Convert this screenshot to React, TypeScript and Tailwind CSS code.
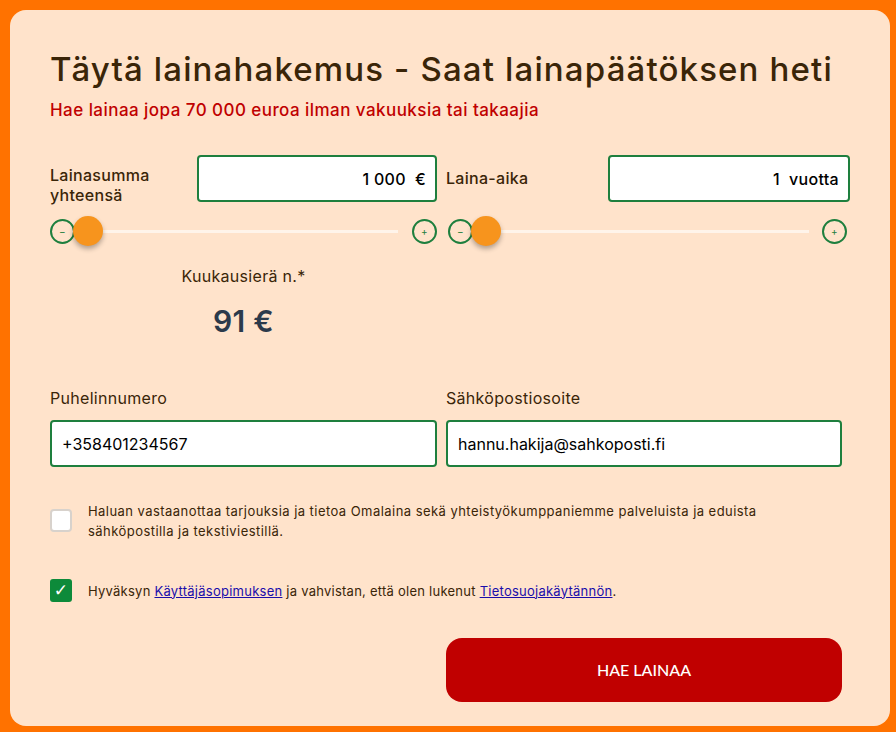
const font = { fontFamily: "Inter, 'Noto Sans', sans-serif" };

function Slider({ trackW }: { trackW: string }) {
  return (
    <div className="flex items-center h-[30px]">
      <button className="w-[25px] h-[25px] rounded-full border-2 border-[#1e7f3e] flex items-center justify-center text-[10px] leading-none text-[#1e7f3e] shrink-0">
        −
      </button>
      <div className="w-[30px] h-[30px] -ml-[2px] rounded-full bg-[#f7941d] shadow-[0_3px_5px_rgba(0,0,0,0.3)] shrink-0 z-10" />
      <div className={`${trackW} h-[3px] bg-[#fff4ea]`} />
      <div className="flex-1" />
      <button className="w-[25px] h-[25px] rounded-full border-2 border-[#1e7f3e] flex items-center justify-center text-[10px] leading-none text-[#1e7f3e] shrink-0">
        +
      </button>
    </div>
  );
}

export default function App() {
  return (
    <div className="w-[896px] h-[732px] bg-[#ff7200] pt-[10px] pl-[10px]" style={font}>
      <div className="w-[880px] h-[716px] rounded-[16px] bg-[#ffe3cb] pl-[40px] pr-[40px] pt-[37px] text-[#3a2508] tracking-[0.3px]">
        <h1 className="text-[33px] leading-[44px] font-medium text-[#3a2508] tracking-[1.15px] whitespace-nowrap">
          Täytä lainahakemus - Saat lainapäätöksen heti
        </h1>
        <p className="mt-[8px] text-[17px] leading-[22px] font-medium text-[#c00000] tracking-[0.45px]">
          Hae lainaa jopa 70 000 euroa ilman vakuuksia tai takaajia
        </p>

        <div className="mt-[34px] grid grid-cols-[387px_404px] gap-x-[9px]">
          <div>
            <div className="flex items-start">
              <div className="w-[147px] h-[47px] pt-[10px] text-[16px] leading-[20px] font-medium overflow-visible">
                Lainasumma
                <br />
                yhteensä
              </div>
              <div className="w-[240px] h-[47px] bg-white border-2 border-[#1e7f3e] rounded-[4px] flex items-center justify-end pr-[9px] text-[16px] font-medium text-black whitespace-pre">
                1 000  €
              </div>
            </div>
            <div className="mt-[14px]">
              <Slider trackW="w-[295px]" />
            </div>
          </div>
          <div>
            <div className="flex items-start">
              <div className="w-[162px] pt-[14px] text-[16px] leading-[18px] font-medium">Laina-aika</div>
              <div className="w-[242px] h-[47px] bg-white border-2 border-[#1e7f3e] rounded-[4px] flex items-center justify-end pr-[9px] text-[16px] font-medium text-black whitespace-pre">
                1  vuotta
              </div>
            </div>
            <div className="mt-[14px] pl-[2px] pr-[3px]">
              <Slider trackW="w-[308px]" />
            </div>
          </div>
        </div>

        <div className="w-[387px] flex flex-col items-center mt-[20px]">
          <div className="text-[16px] leading-[20px] text-[#3a2508]">Kuukausierä n.*</div>
          <div className="mt-[17px] text-[30px] leading-[36px] font-semibold text-[#2c3a4b]">91 €</div>
        </div>

        <div className="mt-[49px] grid grid-cols-[387px_396px] gap-x-[9px]">
          <div>
            <div className="text-[16px] leading-[20px] text-[#3a2508]">Puhelinnumero</div>
            <div className="mt-[12px] h-[47px] bg-white border-2 border-[#1e7f3e] rounded-[4px] flex items-center pl-[10px] text-[16px] text-black tracking-normal">
              +358401234567
            </div>
          </div>
          <div>
            <div className="text-[16px] leading-[20px] text-[#3a2508]">Sähköpostiosoite</div>
            <div className="mt-[12px] h-[47px] bg-white border-2 border-[#1e7f3e] rounded-[4px] flex items-center pl-[10px] text-[16px] text-black tracking-normal">
              hannu.hakija@sahkoposti.fi
            </div>
          </div>
        </div>

        <div className="mt-[34px] flex items-start">
          <div className="mt-[8px] w-[22px] h-[23px] bg-white border-2 border-[#d8d2cc] rounded-[4px] shrink-0" />
          <p className="ml-[16px] text-[13px] leading-[20px] text-[#3a2508] w-[700px] tracking-[0.45px]">
            Haluan vastaanottaa tarjouksia ja tietoa Omalaina sekä yhteistyökumppaniemme palveluista ja eduista sähköpostilla ja tekstiviestillä.
          </p>
        </div>

        <div className="mt-[38px] flex items-center">
          <div className="w-[22px] h-[23px] bg-[#0d8a3a] rounded-[3px] flex items-center justify-center shrink-0 text-white text-[17px] leading-none" style={{ fontFamily: "'DejaVu Sans', sans-serif" }}>
            ✓
          </div>
          <p className="ml-[16px] text-[13px] leading-[20px] text-[#3a2508] tracking-[0.25px]">
            Hyväksyn <a className="underline text-[#1a0dab]" href="#">Käyttäjäsopimuksen</a> ja vahvistan, että olen lukenut{" "}
            <a className="underline text-[#1a0dab]" href="#">Tietosuojakäytännön</a>.
          </p>
        </div>

        <div className="mt-[36px] ml-[396px] w-[396px] h-[64px] rounded-[16px] bg-[#c00000] flex items-center justify-center text-white text-[16px] font-medium tracking-normal" style={{ fontFamily: "Lato, sans-serif" }}>
          HAE LAINAA
        </div>
      </div>
    </div>
  );
}
